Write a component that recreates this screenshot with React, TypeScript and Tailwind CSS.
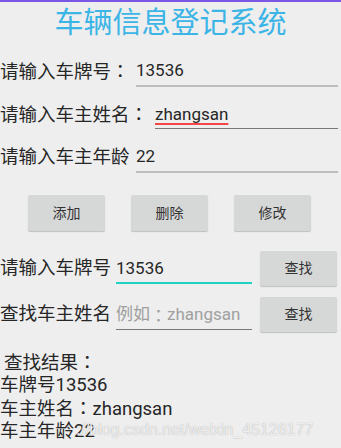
import type { ReactNode } from 'react'

const font = 'font-[Roboto,"Noto_Sans_CJK_SC",sans-serif]'

// full-width colon sits centred in the reference, as in the JP/TC cuts
function Colon() {
  return <span className='font-["Noto_Sans_CJK_JP",sans-serif]'>：</span>
}

function Field({ children, line, className = '' }: { children?: ReactNode; line: string; className?: string }) {
  return <div className={`flex items-center ${line} ${className}`}>{children}</div>
}

function Btn({ label, className = '' }: { label: string; className?: string }) {
  return (
    <div
      className={`flex items-center justify-center rounded-[2px] bg-[#d6d7d7] text-[14px] text-[#333] shadow-[0_1px_1px_rgba(0,0,0,0.2)] ${className}`}
    >
      {label}
    </div>
  )
}

export default function App() {
  return (
    <div className={`relative h-[448px] w-[341px] overflow-hidden bg-[#eeeeee] text-[#262626] ${font}`}>
      <div className="h-[2px] bg-[#7b57e6]" />
      <div className="flex h-[42px] items-center justify-center text-[29px] leading-none text-[#3bb4e6]">
        车辆信息登记系统
      </div>

      <div className="mt-[13px] flex h-[30px] items-center text-[18.5px]">
        <span className="w-[136px] shrink-0">
          请输入车牌号<Colon />
        </span>
        <Field line="border-b-2 border-[#bdbdbd]" className="mr-[3px] h-[30px] flex-1 text-[17px]">
          13536
        </Field>
      </div>

      <div className="mt-[14px] flex h-[28px] items-center text-[18.5px]">
        <span className="w-[155px] shrink-0">
          请输入车主姓名<Colon />
        </span>
        <Field line="border-b border-[#787878]" className="mr-[3px] h-[28px] flex-1 text-[17px]">
          <span className="underline decoration-[#f44747] decoration-2 underline-offset-[3px] [text-decoration-skip-ink:none]">
            zhangsan
          </span>
        </Field>
      </div>

      <div className="mt-[14px] flex h-[30px] items-center text-[18.5px]">
        <span className="w-[136px] shrink-0">请输入车主年龄</span>
        <Field line="border-b-2 border-[#bdbdbd]" className="mr-[3px] h-[30px] flex-1 text-[17px]">
          22
        </Field>
      </div>

      <div className="mt-[22px] flex gap-[26px] pl-[28px]">
        <Btn label="添加" className="h-[36px] w-[77px]" />
        <Btn label="删除" className="h-[36px] w-[77px]" />
        <Btn label="修改" className="h-[36px] w-[77px]" />
      </div>

      <div className="mt-[20px] flex h-[35px] items-center text-[18.5px]">
        <span className="w-[116px] shrink-0">请输入车牌号</span>
        <Field line="border-b-2 border-[#1fd1c1]" className="mt-[2px] h-[28px] w-[136px] text-[17px]">
          13536
        </Field>
        <Btn label="查找" className="ml-[8px] h-[35px] w-[77px]" />
      </div>

      <div className="mt-[11px] flex h-[35px] items-center text-[18.5px]">
        <span className="w-[116px] shrink-0">查找车主姓名</span>
        <Field line="border-b border-[#787878]" className="mt-[2px] h-[28px] w-[136px] text-[17px] text-[#a0a0a0]">
          例如<Colon />zhangsan
        </Field>
        <Btn label="查找" className="ml-[8px] h-[35px] w-[77px]" />
      </div>

      <div className="mt-[18px] text-[18.5px] leading-[22px]">
        <div className="pl-[4px]">
          查找结果<Colon />
        </div>
        <div>车牌号13536</div>
        <div>
          车主姓名<Colon />zhangsan
        </div>
        <div>车主年龄22</div>
      </div>

      <div className="absolute left-[76px] top-[418px] font-['Liberation_Sans',sans-serif] text-[16px] text-white/80 [text-shadow:0_0_1px_#9a9a9a]">
        ://blog.csdn.net/weixin_45126177
      </div>
    </div>
  )
}
